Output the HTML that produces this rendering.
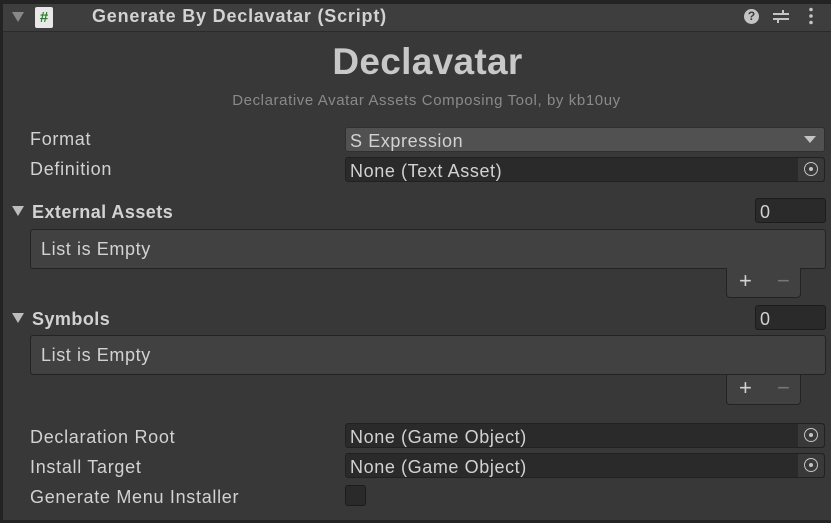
<html><head><style>
body{margin:0;width:831px;height:523px;background:#383838;font-family:"Liberation Sans",sans-serif;color:#d2d2d2;position:relative;overflow:hidden}
div{position:absolute;box-sizing:border-box}
.l{font-size:18px;letter-spacing:0.7px;left:30px}
.f{left:345px;width:480px;height:25px;border:1px solid #212121;border-radius:3px;background:#2a2a2a;font-size:18px;letter-spacing:0.6px;padding:3px 0 0 4px}
.pk{right:0;top:0;width:26px;height:23px;background:#393939;border-radius:0 3px 3px 0}
.pk:after{content:"";position:absolute;left:6px;top:4px;width:14px;height:14px;border:1.5px solid #c4c4c4;border-radius:50%;box-sizing:border-box}
.pk:before{content:"";position:absolute;left:11px;top:9px;width:4px;height:4px;background:#c4c4c4;border-radius:50%}
.h{font-size:18px;letter-spacing:0.45px;font-weight:bold;left:32px}
.tri{left:12px;width:0;height:0;border-left:6px solid transparent;border-right:6px solid transparent;border-top:10px solid #bdbdbd}
.n{left:755px;width:71px;height:25px;background:#2a2a2a;border:1px solid #1c1c1c;border-radius:3px;font-size:18px;padding:3px 4px}
.lb{left:30px;width:796px;height:40px;background:#414141;border:1px solid #232323;border-radius:3px;font-size:18px;letter-spacing:0.6px;padding:9px 10px}
.ft{left:726px;width:75px;height:30px;background:#414141;border:1px solid #232323;border-top:none;border-radius:0 0 4px 4px;font-size:22px}
</style></head><body>
<div style="left:0;top:0;width:831px;height:4px;background:#232323"></div>
<div style="left:0;top:4px;width:831px;height:28px;background:#3e3e3e;border-bottom:1px solid #2a2a2a"></div>
<div style="left:0;top:0;width:3px;height:523px;background:#232323"></div>
<div style="left:0;top:520px;width:831px;height:3px;background:#232323"></div>
<div class="tri" style="top:12px;border-top-color:#888"></div>
<div style="left:35px;top:7px;width:18px;height:21px;background:#e8e8e8;border-radius:2px;color:#2d7a2d;font-weight:bold;font-size:15px;text-align:center;line-height:21px">#</div>
<div style="left:92px;top:6px;font-size:18px;letter-spacing:0.8px;font-weight:bold">Generate By Declavatar (Script)</div>
<div style="left:744px;top:9px;width:15px;height:15px;border-radius:50%;background:#c4c4c4;color:#3e3e3e;font-size:12px;font-weight:bold;text-align:center;line-height:15px">?</div>
<svg style="position:absolute;left:772px;top:8px" width="18" height="16"><path d="M1 6H17M1 11H17M11 2V6M6 11V15" stroke="#c4c4c4" stroke-width="2"/></svg>
<svg style="position:absolute;left:808px;top:7px" width="6" height="18"><circle cx="3" cy="2.5" r="1.8" fill="#c4c4c4"/><circle cx="3" cy="9" r="1.8" fill="#c4c4c4"/><circle cx="3" cy="15.5" r="1.8" fill="#c4c4c4"/></svg>
<div style="left:0;top:41px;width:831px;text-align:center;font-size:37px;letter-spacing:0.3px;font-weight:bold;color:#c8c8c8;padding-left:24px">Declavatar</div>
<div style="left:0;top:92px;width:831px;text-align:center;font-size:15px;letter-spacing:0.6px;color:#8a8a8a;padding-left:22px">Declarative Avatar Assets Composing Tool, by kb10uy</div>
<div class="l" style="top:129px">Format</div>
<div class="f" style="top:127px;background:#515151;border-color:#303030">S Expression<div style="right:8px;top:8px;width:0;height:0;border-left:6px solid transparent;border-right:6px solid transparent;border-top:7px solid #c4c4c4"></div></div>
<div class="l" style="top:159px">Definition</div>
<div class="f" style="top:157px">None (Text Asset)<div class="pk"></div></div>
<div class="tri" style="top:206px"></div>
<div class="h" style="top:202px">External Assets</div>
<div class="n" style="top:198px">0</div>
<div class="lb" style="top:229px">List is Empty</div>
<div class="ft" style="top:268px"><span style="position:absolute;left:12px;top:0">+</span><span style="position:absolute;left:50px;top:0;color:#777">−</span></div>
<div class="tri" style="top:313px"></div>
<div class="h" style="top:309px">Symbols</div>
<div class="n" style="top:305px">0</div>
<div class="lb" style="top:335px">List is Empty</div>
<div class="ft" style="top:375px"><span style="position:absolute;left:12px;top:0">+</span><span style="position:absolute;left:50px;top:0;color:#777">−</span></div>
<div class="l" style="top:427px">Declaration Root</div>
<div class="f" style="top:423px">None (Game Object)<div class="pk"></div></div>
<div class="l" style="top:457px">Install Target</div>
<div class="f" style="top:453px">None (Game Object)<div class="pk"></div></div>
<div class="l" style="top:487px">Generate Menu Installer</div>
<div style="left:345px;top:485px;width:21px;height:21px;background:#2a2a2a;border:1px solid #1c1c1c;border-radius:3px"></div>
</body></html>
